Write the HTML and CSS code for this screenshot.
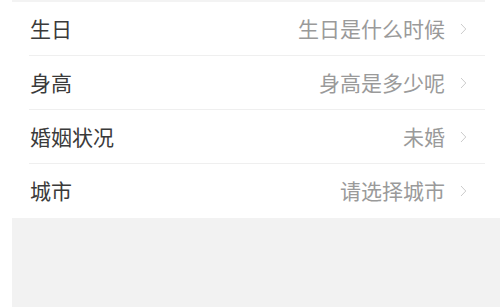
FILE: index.html
```html
<!DOCTYPE html>
<html lang="zh">
<head>
<meta charset="utf-8">
<link rel="stylesheet" href="styles.css">
</head>
<body>
<div class="page">
  <div class="topline"></div>
  <ul class="list">
    <li class="row"><span class="label">生日</span><span class="value">生日是什么时候</span><svg class="chev" viewBox="0 0 7 12"><path d="M1 1 L5.8 6 L1 11" fill="none" stroke="#cccccc" stroke-width="1"/></svg></li>
    <li class="row"><span class="label">身高</span><span class="value">身高是多少呢</span><svg class="chev" viewBox="0 0 7 12"><path d="M1 1 L5.8 6 L1 11" fill="none" stroke="#cccccc" stroke-width="1"/></svg></li>
    <li class="row"><span class="label">婚姻状况</span><span class="value">未婚</span><svg class="chev" viewBox="0 0 7 12"><path d="M1 1 L5.8 6 L1 11" fill="none" stroke="#cccccc" stroke-width="1"/></svg></li>
    <li class="row last"><span class="label">城市</span><span class="value">请选择城市</span><svg class="chev" viewBox="0 0 7 12"><path d="M1 1 L5.8 6 L1 11" fill="none" stroke="#cccccc" stroke-width="1"/></svg></li>
  </ul>
  <div class="filler"></div>
</div>
</body>
</html>
```

FILE: styles.css
```css
html, body {
  margin: 0;
  padding: 0;
  background: #ffffff;
  width: 500px;
  height: 307px;
  overflow: hidden;
}
.page {
  margin-left: 12px;
  height: 307px;
  display: flex;
  flex-direction: column;
  font-family: "Noto Sans CJK SC", "Noto Sans", sans-serif;
}
.topline {
  height: 2px;
  width: 473px;
  background: #f3f3f3;
}
.list {
  list-style: none;
  margin: 0;
  padding: 0;
  width: 473px;
  background: #ffffff;
}
.row {
  display: flex;
  align-items: center;
  height: 53px;
  margin-left: 17px;
  border-bottom: 1px solid #efefef;
}
.row.last {
  border-bottom: none;
  height: 54px;
}
.label {
  font-size: 21px;
  line-height: 1;
  color: #3a3a3a;
  margin-left: 1px;
  margin-top: -1px;
}
.value {
  margin-left: auto;
  font-size: 21px;
  line-height: 1;
  color: #9a9a9a;
  margin-top: -1px;
}
.chev {
  width: 7px;
  height: 12px;
  margin-left: 15px;
  margin-right: 18px;
}
.filler {
  flex: 1;
  background: #f2f2f2;
}
```
